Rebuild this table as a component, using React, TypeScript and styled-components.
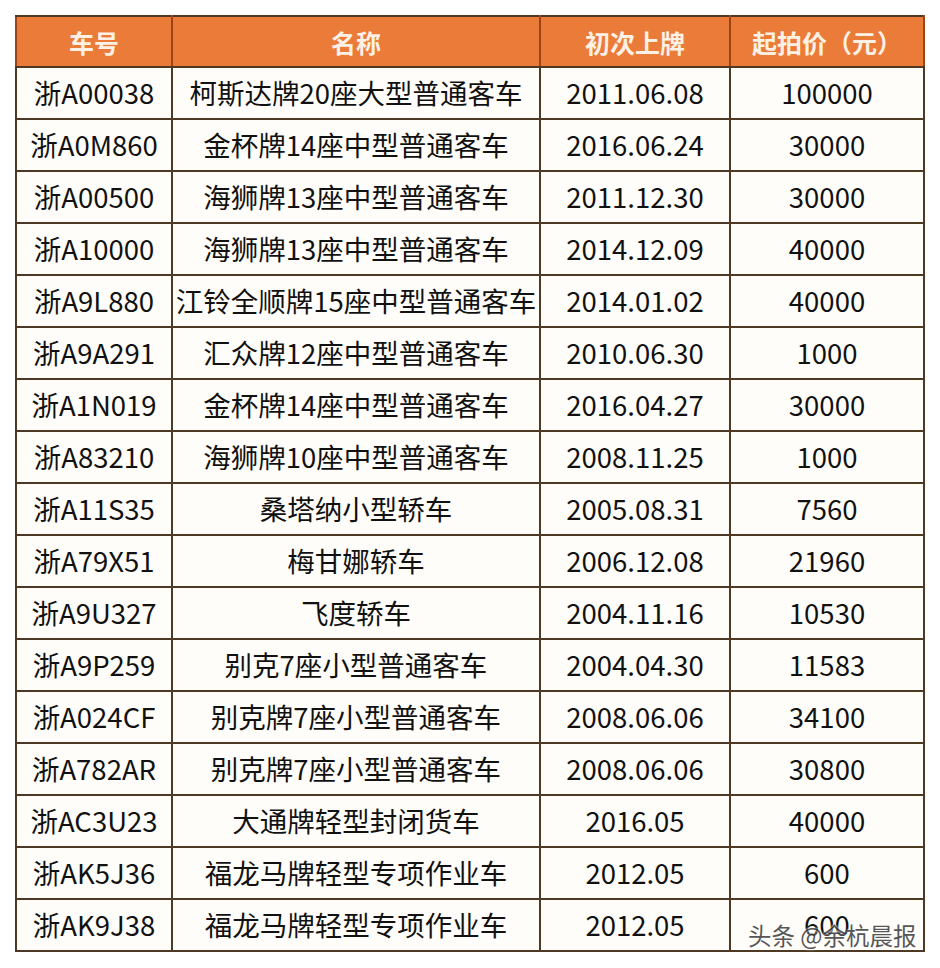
import React from "react";
import styled, { createGlobalStyle } from "styled-components";

type Lot = {
  plate: string;
  name: string;
  date: string;
  price: string;
};

const lots: Lot[] = [
  { plate: "浙A00038", name: "柯斯达牌20座大型普通客车", date: "2011.06.08", price: "100000" },
  { plate: "浙A0M860", name: "金杯牌14座中型普通客车", date: "2016.06.24", price: "30000" },
  { plate: "浙A00500", name: "海狮牌13座中型普通客车", date: "2011.12.30", price: "30000" },
  { plate: "浙A10000", name: "海狮牌13座中型普通客车", date: "2014.12.09", price: "40000" },
  { plate: "浙A9L880", name: "江铃全顺牌15座中型普通客车", date: "2014.01.02", price: "40000" },
  { plate: "浙A9A291", name: "汇众牌12座中型普通客车", date: "2010.06.30", price: "1000" },
  { plate: "浙A1N019", name: "金杯牌14座中型普通客车", date: "2016.04.27", price: "30000" },
  { plate: "浙A83210", name: "海狮牌10座中型普通客车", date: "2008.11.25", price: "1000" },
  { plate: "浙A11S35", name: "桑塔纳小型轿车", date: "2005.08.31", price: "7560" },
  { plate: "浙A79X51", name: "梅甘娜轿车", date: "2006.12.08", price: "21960" },
  { plate: "浙A9U327", name: "飞度轿车", date: "2004.11.16", price: "10530" },
  { plate: "浙A9P259", name: "别克7座小型普通客车", date: "2004.04.30", price: "11583" },
  { plate: "浙A024CF", name: "别克牌7座小型普通客车", date: "2008.06.06", price: "34100" },
  { plate: "浙A782AR", name: "别克牌7座小型普通客车", date: "2008.06.06", price: "30800" },
  { plate: "浙AC3U23", name: "大通牌轻型封闭货车", date: "2016.05", price: "40000" },
  { plate: "浙AK5J36", name: "福龙马牌轻型专项作业车", date: "2012.05", price: "600" },
  { plate: "浙AK9J38", name: "福龙马牌轻型专项作业车", date: "2012.05", price: "600" },
];

// column widths, border to border
const cols = [156, 368, 190, 194];

const GlobalStyle = createGlobalStyle`
  html, body {
    margin: 0;
    padding: 0;
    background: #ffffff;
  }
  body {
    font-family: "Noto Sans CJK SC", "Noto Sans", sans-serif;
  }
`;

const Page = styled.div`
  position: relative;
  width: 940px;
  height: 968px;
  padding: 15px 0 0 15px;
  box-sizing: border-box;
  background: #ffffff;
`;

const Table = styled.table`
  border-collapse: collapse;
  table-layout: fixed;
  width: 910px;
  background: #fffdf9;
  border: 2px solid #4e3a24;
`;

const Col = styled.col<{ $w: number }>`
  width: ${(p) => p.$w}px;
`;

const HeadCell = styled.th`
  height: 49px;
  padding: 0;
  background: #eb7b38;
  color: #fdf1e6;
  font-size: 25px;
  font-weight: 700;
  text-align: center;
  border: 2px solid #4e3a24;
  border-left-color: #9a4418;
  border-right-color: #9a4418;
`;

const Cell = styled.td`
  height: 50px;
  padding: 0;
  color: #111111;
  font-size: 27.5px;
  font-weight: 400;
  text-align: center;
  white-space: nowrap;
  overflow: hidden;
  border: 2px solid #4e3a24;
  line-height: 1;
`;

const Watermark = styled.div`
  position: absolute;
  left: 748px;
  top: 918px;
  color: #3a3a3a;
  font-size: 23.5px;
  font-family: "Noto Sans CJK SC", sans-serif;
  text-shadow: 0 0 2px #ffffff, 0 0 3px #ffffff;
  opacity: 0.85;
`;

export default function App() {
  return (
    <Page>
      <GlobalStyle />
      <Table>
        <colgroup>
          {cols.map((w, i) => (
            <Col key={i} $w={w} />
          ))}
        </colgroup>
        <thead>
          <tr>
            <HeadCell>车号</HeadCell>
            <HeadCell>名称</HeadCell>
            <HeadCell>初次上牌</HeadCell>
            <HeadCell>起拍价（元）</HeadCell>
          </tr>
        </thead>
        <tbody>
          {lots.map((lot) => (
            <tr key={lot.plate}>
              <Cell>{lot.plate}</Cell>
              <Cell>{lot.name}</Cell>
              <Cell>{lot.date}</Cell>
              <Cell>{lot.price}</Cell>
            </tr>
          ))}
        </tbody>
      </Table>
      <Watermark>头条 @余杭晨报</Watermark>
    </Page>
  );
}
